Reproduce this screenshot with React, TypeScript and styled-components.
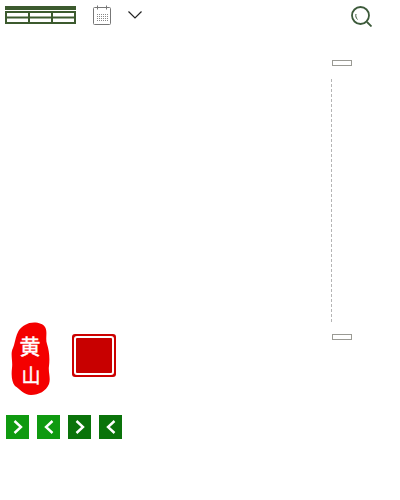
import React from 'react';
import styled, { createGlobalStyle } from 'styled-components';

const GlobalStyle = createGlobalStyle`
  html, body {
    margin: 0;
    padding: 0;
    background: #fff;
    font-family: "Liberation Sans", "Noto Sans CJK SC", sans-serif;
  }
`;

const StyledPage = styled.div`
  width: 400px;
  height: 500px;
  overflow: hidden;
`;

const StyledToolbar = styled.div`
  display: flex;
  align-items: flex-start;
  height: 60px;
  padding: 5px 0 0 5px;
  box-sizing: border-box;
`;

const StyledIconButton = styled.button<{ $left: number; $top: number }>`
  display: block;
  flex: none;
  padding: 0;
  border: none;
  background: transparent;
  line-height: 0;
  cursor: pointer;
  margin-left: ${(p) => p.$left}px;
  margin-top: ${(p) => p.$top}px;
`;

const StyledBody = styled.div`
  display: grid;
  grid-template-columns: 331px 21px;
`;

const StyledLeft = styled.div`
  display: flex;
  flex-direction: column;
  padding-top: 262px;
`;

const StyledSeals = styled.div`
  display: flex;
  align-items: flex-start;
  padding-left: 11px;
  gap: 21px;
`;

const StyledSquareSeal = styled.div`
  width: 44px;
  height: 43px;
  margin-top: 12px;
  box-sizing: border-box;
  padding: 2px;
  background: #cc0000;
  border-radius: 3px;
`;

const StyledSquareInner = styled.div`
  width: 100%;
  height: 100%;
  box-sizing: border-box;
  border: 2px solid #fff;
  border-radius: 3px;
  background: #c80000;
`;

const StyledPager = styled.div`
  display: flex;
  gap: 8px;
  margin-top: 19px;
  padding-left: 6px;
`;

const StyledPageButton = styled.button<{ $dark?: boolean }>`
  width: 23px;
  height: 24px;
  padding: 0;
  border: none;
  display: flex;
  align-items: center;
  justify-content: center;
  background: ${(p) => (p.$dark ? '#0a730a' : '#0f9a10')};
  cursor: pointer;
`;

const StyledSlider = styled.div`
  display: flex;
  flex-direction: column;
  align-items: flex-start;
`;

const StyledHandle = styled.div`
  width: 20px;
  height: 6px;
  margin-left: 1px;
  box-sizing: border-box;
  border: 1px solid #9a9a94;
  background: #fff;
`;

const StyledTrack = styled.div`
  width: 0;
  height: 243px;
  margin: 13px 0 12px;
  border-left: 1px dashed #b5b5b5;
`;

const StyledSealText = styled.text<{ $size: number }>`
  font-family: "Noto Sans CJK SC", sans-serif;
  font-weight: 400;
  font-size: ${(p) => p.$size}px;
  fill: #fff;
  stroke: #fff;
  stroke-width: 0.4px;
`;

function TableIcon() {
  return (
    <svg width="71" height="18" viewBox="0 0 71 18">
      <rect x="0" y="0" width="71" height="4" fill="#3c5a2e" />
      <rect x="0" y="5" width="71" height="13" fill="#3c5a2e" />
      {[2, 25, 48].map((x) => (
        <React.Fragment key={x}>
          <rect x={x} y="7" width="21" height="3.5" fill="#fff" />
          <rect x={x} y="12.5" width="21" height="3.5" fill="#fff" />
        </React.Fragment>
      ))}
    </svg>
  );
}

function CalendarIcon() {
  const rows = [9, 11, 13, 15];
  const cols = [4, 6, 8, 10, 12, 14];
  return (
    <svg width="18" height="20" viewBox="0 0 18 20" fill="none" stroke="#777" strokeWidth="1">
      <rect x="0.5" y="2.5" width="17" height="17" rx="1" />
      <path d="M4.5 0.5V4.5M13.5 0.5V4.5" />
      {rows.map((y) =>
        cols.map((x) => <rect key={`${x}-${y}`} x={x} y={y} width="1" height="1" fill="#888" stroke="none" />)
      )}
    </svg>
  );
}

function ChevronIcon() {
  return (
    <svg width="14" height="8" viewBox="0 0 14 8" fill="none" stroke="#222" strokeWidth="1.2">
      <path d="M0.5 0.5L7 7L13.5 0.5" />
    </svg>
  );
}

function SearchIcon() {
  return (
    <svg width="21" height="21" viewBox="0 0 21 21" fill="none" stroke="#3c5a3a" strokeWidth="1.8">
      <circle cx="9.5" cy="9.5" r="8.5" />
      <path d="M16 16L20.5 20.5" />
      <path d="M5 8C4.4 10 5 12 6.5 13.5" strokeWidth="1" />
    </svg>
  );
}

function OvalSeal() {
  return (
    <svg width="40" height="74" viewBox="0 0 40 74">
      <path
        d="M14 3C20 -1 31 0 34 5C37 10 34 16 36 22C38 28 39 36 38 44C37 50 40 56 38 62C35 69 28 73 20 73C13 73 9 67 4 64C1 60 0 54 1 46C2 38 -1 32 2 26C5 20 4 8 14 3Z"
        fill="#f40000"
      />
      <StyledSealText $size={21} x="19" y="32" textAnchor="middle">黄</StyledSealText>
      <StyledSealText $size={19} x="20" y="61" textAnchor="middle">山</StyledSealText>
    </svg>
  );
}

function PagerArrow({ left }: { left?: boolean }) {
  return (
    <svg width="12" height="16" viewBox="0 0 12 16" fill="none" stroke="#fff" strokeWidth="2.4">
      <path d={left ? 'M9.5 2L3 8L9.5 14' : 'M2.5 2L9 8L2.5 14'} />
    </svg>
  );
}

function App() {
  return (
    <StyledPage>
      <GlobalStyle />
      <StyledToolbar>
        <StyledIconButton type="button" $left={0} $top={1}><TableIcon /></StyledIconButton>
        <StyledIconButton type="button" $left={17} $top={0}><CalendarIcon /></StyledIconButton>
        <StyledIconButton type="button" $left={17} $top={6}><ChevronIcon /></StyledIconButton>
        <StyledIconButton type="button" $left={209} $top={1}><SearchIcon /></StyledIconButton>
      </StyledToolbar>
      <StyledBody>
        <StyledLeft>
          <StyledSeals>
            <OvalSeal />
            <StyledSquareSeal><StyledSquareInner /></StyledSquareSeal>
          </StyledSeals>
          <StyledPager>
            <StyledPageButton type="button"><PagerArrow /></StyledPageButton>
            <StyledPageButton type="button"><PagerArrow left /></StyledPageButton>
            <StyledPageButton type="button" $dark><PagerArrow /></StyledPageButton>
            <StyledPageButton type="button" $dark><PagerArrow left /></StyledPageButton>
          </StyledPager>
        </StyledLeft>
        <StyledSlider>
          <StyledHandle />
          <StyledTrack />
          <StyledHandle />
        </StyledSlider>
      </StyledBody>
    </StyledPage>
  );
}

export default App;
